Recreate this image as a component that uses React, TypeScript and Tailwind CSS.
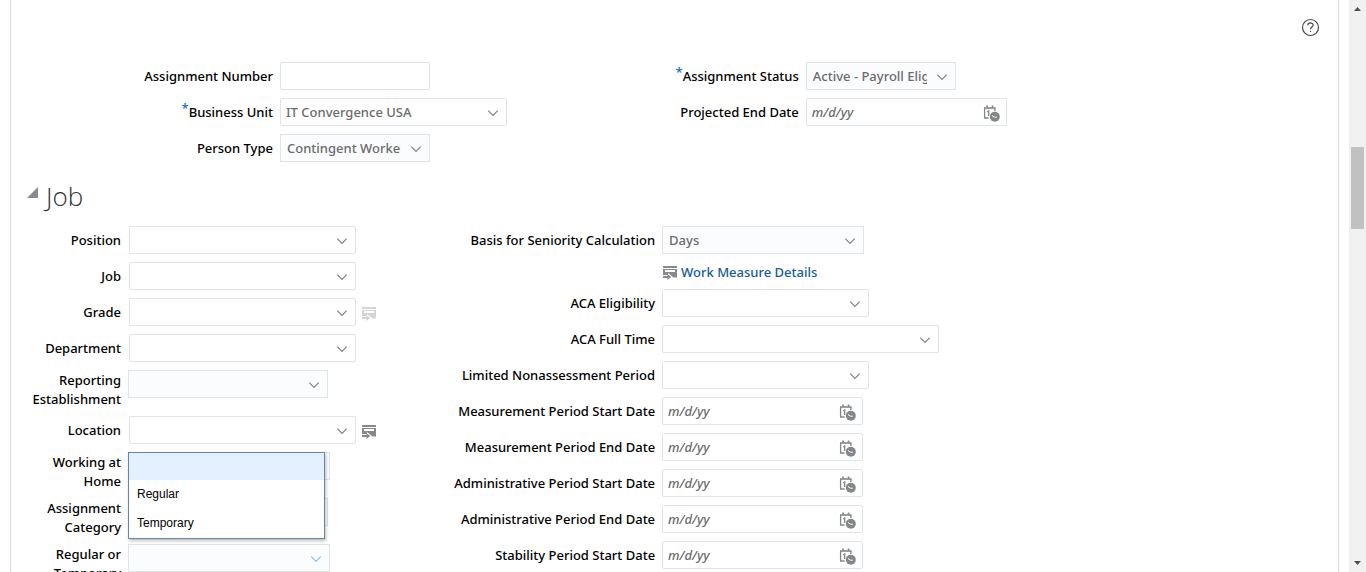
import { useId, type ReactNode } from "react";

const fieldBox = "h-7 border border-[#dfe4e7] text-[#6b6b6b]";
const textStyle = "text-[13px] font-medium";

function Chevron({ className = "text-[#7d8286]" }: { className?: string }) {
  return (
    <svg viewBox="0 0 12 8" className={`h-2 w-3 ${className}`} fill="none" stroke="currentColor" strokeWidth="1.2" aria-hidden="true">
      <path d="M1.3 1.6 6 6.3l4.7-4.7" />
    </svg>
  );
}

function CalendarClock() {
  return (
    <svg viewBox="0 0 17 17" className="size-[17px]" aria-hidden="true">
      <path d="M1 2.2h11.5v1.6H1z" fill="#82878b" />
      <path d="M1.6 3v10h4M11.9 3v3" fill="none" stroke="#82878b" strokeWidth="1.3" />
      <path d="M3.2.6h1.7v2H3.2zM8.7.6h1.7v2H8.7z" fill="#82878b" />
      <path d="M4.2 7 5.7 6v5" fill="none" stroke="#82878b" strokeWidth="1.3" />
      <circle cx="11.8" cy="11.8" r="5" fill="#82878b" />
      <path d="m9 10.6 2.4 1.6h2.4" fill="none" stroke="#fff" strokeWidth="1" />
    </svg>
  );
}

function DetailIcon({ className = "text-[#868a8e]" }: { className?: string }) {
  return (
    <svg viewBox="0 0 14 14" className={`size-[14px] ${className}`} fill="currentColor" aria-hidden="true">
      <path d="M0 0h14v2H0z" />
      <path fillRule="evenodd" d="M0 3h14v8.4h-3.6L5 6.9V9H0zM2 4v2h10V4z" />
      <path d="M0 10h4.4V8L8.3 11l-3.9 3v-2H0z" />
    </svg>
  );
}

function Row({ label, labelWidth, gap = "gap-[7px]", required, wrap, children }: {
  label: string;
  labelWidth: string;
  gap?: string;
  required?: boolean;
  wrap?: boolean;
  children: (id: string) => ReactNode;
}) {
  const id = useId();
  return (
    <div className={`flex items-start ${gap}`}>
      <label htmlFor={id} className={`shrink-0 text-right text-black ${textStyle} ${wrap ? "-mb-px pt-px leading-[19px]" : "leading-7"} ${labelWidth}`}>
        {required && <span className="relative -top-1 text-[#0572ce]">*</span>}
        {label}
      </label>
      {children(id)}
    </div>
  );
}

function Choice({ id, width, options = [""], chevron }: { id: string; width: string; options?: string[]; chevron?: string }) {
  return (
    <div className={`relative ${width}`}>
      <select id={id} className={`w-full appearance-none bg-[#fbfcfe] pt-0.5 pr-7 pl-1.5 ${fieldBox} ${textStyle}`}>
        {options.map((o) => (
          <option key={o}>{o}</option>
        ))}
      </select>
      <span className="pointer-events-none absolute inset-y-0 right-2 flex items-center pt-0.5">
        <Chevron className={chevron} />
      </span>
    </div>
  );
}

function Lookup({ id, width, value = "" }: { id: string; width: string; value?: string }) {
  return (
    <div className={`flex items-center rounded-xs bg-white pt-0.5 ${fieldBox} ${width}`}>
      <input id={id} defaultValue={value} className={`min-w-0 flex-1 pl-[5px] outline-none ${textStyle}`} />
      <button type="button" aria-label="Search" className="mr-[7px] flex shrink-0 justify-center">
        <Chevron />
      </button>
    </div>
  );
}

function DateField({ id, width }: { id: string; width: string }) {
  return (
    <div className={`flex items-center rounded-xs bg-white pt-0.5 ${fieldBox} ${width}`}>
      <input id={id} placeholder="m/d/yy" className={`min-w-0 flex-1 pl-[5px] outline-none placeholder:text-[#6b6b6b] placeholder:italic ${textStyle}`} />
      <button type="button" aria-label="Select date" className="mr-1.5 shrink-0">
        <CalendarClock />
      </button>
    </div>
  );
}

const periods = [
  "Measurement Period Start Date",
  "Measurement Period End Date",
  "Administrative Period Start Date",
  "Administrative Period End Date",
  "Stability Period Start Date",
];

const top1 = "w-[262px]";
const top2 = "w-[257px]";
const job1 = "w-[94px]";
const job2 = "w-[246px]";

export default function App() {
  return (
    <div className="flex h-screen overflow-hidden bg-white font-['Noto_Sans',sans-serif]">
      <main className="mr-[10px] ml-[10px] min-w-0 flex-1 border-x border-[#d5dfe8]">
        <div className="flex justify-end pt-[18px] pr-[18px]">
          <button type="button" aria-label="Help">
            <svg viewBox="0 0 19 19" className="size-[19px]" fill="none" stroke="#45494c" strokeWidth="1.2" aria-hidden="true">
              <circle cx="9.5" cy="9.5" r="8" />
              <path d="M6.8 7.3c0-3.3 5.4-3.2 5.4-.2 0 1.9-2.7 2-2.7 4.2M9.5 12.7v1.4" />
            </svg>
          </button>
        </div>

        <section className="grid grid-cols-[2fr_3fr] pt-[25px]">
          <div className="flex flex-col gap-2">
            <Row label="Assignment Number" labelWidth={top1}>
              {(id) => <input id={id} className={`w-[150px] rounded-xs px-[5px] ${fieldBox} ${textStyle}`} />}
            </Row>
            <Row label="Business Unit" labelWidth={top1} required>
              {(id) => <Lookup id={id} width="w-[227px]" value="IT Convergence USA" />}
            </Row>
            <Row label="Person Type" labelWidth={top1}>
              {(id) => <Choice id={id} width="w-[150px]" options={["Contingent Worker"]} />}
            </Row>
          </div>
          <div className="flex flex-col gap-2">
            <Row label="Assignment Status" labelWidth={top2} required>
              {(id) => <Choice id={id} width="w-[150px]" options={["Active - Payroll Eligible"]} />}
            </Row>
            <Row label="Projected End Date" labelWidth={top2}>
              {(id) => <DateField id={id} width="w-[201px]" />}
            </Row>
          </div>
        </section>

        <h2 className="mt-3.5 flex h-10 items-center gap-2 pl-4 font-['Open_Sans',sans-serif] text-[26px] font-light text-[#333]">
          <button type="button" aria-label="Collapse Job" className="-mt-2">
            <svg viewBox="0 0 11 11" className="size-[11px]" aria-hidden="true">
              <path d="M11 0v11H0z" fill="#868b90" />
            </svg>
          </button>
          Job
        </h2>

        <section className="grid grid-cols-[3fr_7fr] pt-2.5">
          <div className="flex flex-col gap-2 pl-4">
            <Row label="Position" labelWidth={job1} gap="gap-2">
              {(id) => <Lookup id={id} width="w-[227px]" />}
            </Row>
            <Row label="Job" labelWidth={job1} gap="gap-2">
              {(id) => <Lookup id={id} width="w-[227px]" />}
            </Row>
            <Row label="Grade" labelWidth={job1} gap="gap-2">
              {(id) => (
                <div className="flex items-center gap-1.5">
                  <Lookup id={id} width="w-[227px]" />
                  <button type="button" disabled aria-label="Grade details" className="pt-1">
                    <DetailIcon className="text-[#d3d5d7]" />
                  </button>
                </div>
              )}
            </Row>
            <Row label="Department" labelWidth={job1} gap="gap-2">
              {(id) => <Lookup id={id} width="w-[227px]" />}
            </Row>
            <Row label="Reporting Establishment" labelWidth={job1} wrap>
              {(id) => <Choice id={id} width="w-[200px]" />}
            </Row>
            <Row label="Location" labelWidth={job1} gap="gap-2">
              {(id) => (
                <div className="flex items-center gap-1.5">
                  <Lookup id={id} width="w-[227px]" />
                  <button type="button" aria-label="Location details" className="pt-1">
                    <DetailIcon />
                  </button>
                </div>
              )}
            </Row>
            <Row label="Working at Home" labelWidth={job1} wrap>
              {(id) => (
                <div className="relative">
                  <Choice id={id} width="w-[202px]" />
                  <ul role="listbox" aria-label="Regular or Temporary" className="absolute top-0 left-0 z-10 w-[197px] border border-[#6488a3] bg-white font-['Liberation_Sans',sans-serif] text-xs leading-[29px] text-black shadow-[1px_2px_3px_rgba(0,0,0,0.25)]">
                    <li role="option" aria-selected="true" aria-label="None" className="h-[27px] bg-[#e4f0ff]" />
                    <li role="option" aria-selected="false" className="px-2">Regular</li>
                    <li role="option" aria-selected="false" className="px-2">Temporary</li>
                  </ul>
                </div>
              )}
            </Row>
            <Row label="Assignment Category" labelWidth={job1} wrap>
              {(id) => <Choice id={id} width="w-[200px]" />}
            </Row>
            <Row label="Regular or Temporary" labelWidth={job1} wrap>
              {(id) => <Choice id={id} width="w-[202px]" chevron="text-[#84bdea]" />}
            </Row>
          </div>

          <div className="flex flex-col gap-2">
            <Row label="Basis for Seniority Calculation" labelWidth={job2}>
              {(id) => <Choice id={id} width="w-[202px]" options={["Days"]} />}
            </Row>
            <a href="#work-measure" className={`-mb-px ml-[254px] flex items-center gap-1 self-start pt-px leading-[19px] text-[#145c9e] ${textStyle}`}>
              <DetailIcon />
              Work Measure Details
            </a>
            <Row label="ACA Eligibility" labelWidth={job2}>
              {(id) => <Lookup id={id} width="w-[207px]" />}
            </Row>
            <Row label="ACA Full Time" labelWidth={job2}>
              {(id) => <Lookup id={id} width="w-[277px]" />}
            </Row>
            <Row label="Limited Nonassessment Period" labelWidth={job2}>
              {(id) => <Lookup id={id} width="w-[207px]" />}
            </Row>
            {periods.map((p) => (
              <Row key={p} label={p} labelWidth={job2}>
                {(id) => <DateField id={id} width="w-[201px]" />}
              </Row>
            ))}
          </div>
        </section>
      </main>

      <div aria-hidden="true" className="flex w-[17px] shrink-0 flex-col items-center justify-between bg-[#f1f1f1] py-[7px]">
        <svg viewBox="0 0 7 4" className="h-1 w-[7px]" fill="#505050">
          <path d="M3.5 0 7 4H0z" />
        </svg>
        <div className="flex w-full flex-1 flex-col items-center">
          <div className="basis-[24.7%]" />
          <div className="w-[13px] basis-[15%] bg-[#c1c1c1]" />
        </div>
        <svg viewBox="0 0 7 4" className="h-1 w-[7px]" fill="#505050">
          <path d="M0 0h7L3.5 4z" />
        </svg>
      </div>
    </div>
  );
}
